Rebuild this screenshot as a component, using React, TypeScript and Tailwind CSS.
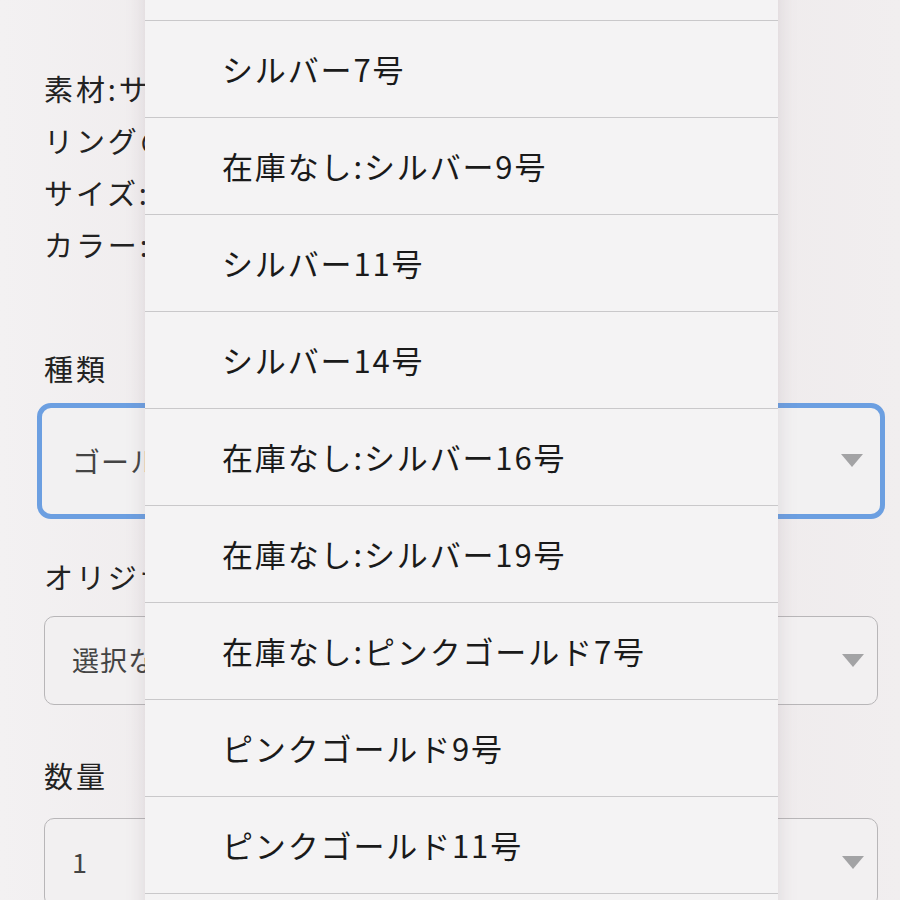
import React from 'react'

const options = [
  'ゴールド19号',
  'シルバー7号',
  '在庫なし:シルバー9号',
  'シルバー11号',
  'シルバー14号',
  '在庫なし:シルバー16号',
  '在庫なし:シルバー19号',
  '在庫なし:ピンクゴールド7号',
  'ピンクゴールド9号',
  'ピンクゴールド11号',
  'ピンクゴールド14号',
]

const specs = [
  '素材:サージカルステンレス',
  'リングの幅:約3mm',
  'サイズ:7号〜19号',
  'カラー:ゴールド・シルバー・ピンクゴールド',
]

const Arrow = () => (
  <svg width="22" height="14" viewBox="0 0 22 14" className="shrink-0">
    <path d="M0 0 H22 L11 13 Z" fill="#a3a3a5" />
  </svg>
)

const App = () => {
  return (
    <div
      className="relative h-[900px] w-[900px] overflow-hidden bg-gradient-to-r from-[#f3f1f2] via-[#ebe6e8] to-[#f1eeef] text-[#222]"
      style={{ fontFamily: '"Noto Sans CJK JP", "Noto Sans", sans-serif' }}
    >
      <div className="pl-[44px] pr-[22px] pt-[62px]">

        <div className="text-[29px] leading-[52px] tracking-[0.1em] whitespace-nowrap">
          {specs.map(s => (
            <p key={s}>{s}</p>
          ))}
        </div>

        <p className="mt-[78px] text-[29px] leading-[40px] tracking-[0.1em]">種類</p>

        <div className="-ml-[7px] -mr-[7px] mt-[15px] h-[116px] rounded-[14px] border-[5px] border-[#6c9fe1] bg-[#f2f1f2] flex items-center justify-between pl-[30px] pr-[17px]">
          <span className="text-[28px] text-[#444] tracking-[0.04em]">ゴールド7号</span>
          <Arrow />
        </div>

        <p className="mt-[37px] text-[29px] leading-[40px] tracking-[0.1em] whitespace-nowrap">オリジナル刻印</p>

        <div className="mt-[20px] h-[89px] rounded-[10px] border-[1.5px] border-[#b8b6b8] bg-[#f2f0f1] flex items-center justify-between pl-[27px] pr-[13px]">
          <span className="text-[27px] text-[#444] tracking-[0.04em]">選択なし</span>
          <Arrow />
        </div>

        <p className="mt-[50px] text-[29px] leading-[40px] tracking-[0.1em]">数量</p>

        <div className="mt-[23px] h-[89px] rounded-[10px] border-[1.5px] border-[#b8b6b8] bg-[#f2f0f1] flex items-center justify-between pl-[27px] pr-[13px]">
          <span className="text-[27px] text-[#444]">1</span>
          <Arrow />
        </div>
      </div>

      {/* open picker list over the form */}
      <div className="absolute left-[145px] top-[-76px] w-[633px] bg-[#f4f3f4] shadow-[0_0_18px_rgba(120,100,110,0.18)]">
        {options.map(opt => (
          <div
            key={opt}
            className="h-[97px] border-b border-[#c9c8ca] flex items-center pl-[77px] text-[31px] tracking-[0.06em] text-[#1a1a1a] whitespace-nowrap"
          >
            {opt}
          </div>
        ))}
      </div>
    </div>
  )
}

export default App
